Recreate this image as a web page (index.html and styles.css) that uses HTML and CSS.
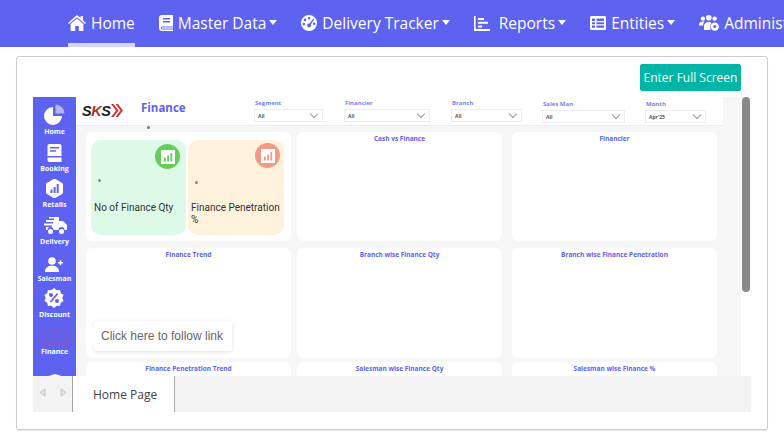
FILE: index.html
```html
<!DOCTYPE html>
<html lang="en">
<head>
  <meta charset="UTF-8" />
  <title>Finance</title>
  <link rel="stylesheet" href="styles.css">
</head>
<body>
  <nav class="topnav">
    <a class="navlink active">
      <svg class="navicon" width="18" height="16" viewBox="0 0 18 16"><path d="M9 0 L12.5 3 V1.2 H15 V5.2 L18 7.9 L17 9 L9 2.2 L1 9 L0 7.9 Z M9 3.6 L15.4 9 V16 H10.8 V11 H7.2 V16 H2.6 V9 Z"/></svg>
      <span>Home</span>
    </a>
    <a class="navlink">
      <svg class="navicon" width="14" height="16" viewBox="0 0 14 16"><path fill-rule="evenodd" d="M3 0 H14 V11.5 H3 A1.6 1.6 0 0 0 3 14.5 H14 V16 H3 A3 3 0 0 1 0 13 V3 A3 3 0 0 1 3 0 Z M4 3 V4.4 H11 V3 Z M4 6 V7.4 H11 V6 Z"/><path d="M3 12.4 H14 V13.6 H3 Z"/></svg>
      <span>Master Data</span><i class="caret"></i>
    </a>
    <a class="navlink">
      <svg class="navicon" width="16" height="16" viewBox="0 0 16 16"><path fill-rule="evenodd" d="M8 0 A8 8 0 1 1 8 16 A8 8 0 1 1 8 0 Z M8 2 A1.3 1.3 0 1 0 8 4.6 A1.3 1.3 0 1 0 8 2 Z M4 3.6 A1.3 1.3 0 1 0 4 6.2 A1.3 1.3 0 1 0 4 3.6 Z M12.2 3.8 L8.6 8.6 A1.9 1.9 0 1 0 9.8 9.6 L13.2 4.6 Z M2.8 7.8 A1.3 1.3 0 1 0 2.8 10.4 A1.3 1.3 0 1 0 2.8 7.8 Z M13.2 7.4 A1.3 1.3 0 1 0 13.2 10 A1.3 1.3 0 1 0 13.2 7.4 Z"/></svg>
      <span>Delivery Tracker</span><i class="caret"></i>
    </a>
    <a class="navlink">
      <svg class="navicon wide" width="16" height="16" viewBox="0 0 16 16"><path d="M0 1 H1.6 V14 H16 V16 H0 Z M4 3 H10 V5 H4 Z M4 6.8 H14 V8.8 H4 Z M4 10.6 H8 V12.6 H4 Z"/></svg>
      <span>Reports</span><i class="caret"></i>
    </a>
    <a class="navlink">
      <svg class="navicon" width="16" height="14" viewBox="0 0 16 14"><path fill-rule="evenodd" d="M1.5 0 H14.5 A1.5 1.5 0 0 1 16 1.5 V12.5 A1.5 1.5 0 0 1 14.5 14 H1.5 A1.5 1.5 0 0 1 0 12.5 V1.5 A1.5 1.5 0 0 1 1.5 0 Z M2 2.5 V5 H5 V2.5 Z M6.5 2.5 V5 H14 V2.5 Z M2 6.2 V8.2 H5 V6.2 Z M6.5 6.2 V8.2 H14 V6.2 Z M2 9.4 V11.8 H5 V9.4 Z M6.5 9.4 V11.8 H14 V9.4 Z"/></svg>
      <span>Entities</span><i class="caret"></i>
    </a>
    <a class="navlink">
      <svg class="navicon" width="20" height="16" viewBox="0 0 20 16"><circle cx="4" cy="3.6" r="2.2"/><circle cx="9.8" cy="2.8" r="2.8"/><circle cx="15.6" cy="3.6" r="2.2"/><path d="M0 10.5 C0 7.5 1.5 6.6 4 6.6 C5 6.6 5.4 7 5.4 7 C4.4 8 4.2 9 4.2 10.5 Z M5 15 V11.5 C5 8.6 7 7 9.8 7 C11 7 12 7.4 12.6 8 C11 9.5 10.8 12 11.6 15 Z"/><circle cx="15.8" cy="11.6" r="4.2"/><circle cx="15.8" cy="11.6" r="1.5" fill="#5d62f0"/></svg>
      <span>Administration</span>
    </a>
  </nav>

  <main class="card">
    <div class="card-actions">
      <button class="fs-btn">Enter Full Screen</button>
    </div>

    <div class="viewer">
      <div class="report">
        <aside class="side">
          <div class="side-item first">
            <svg width="21" height="21" viewBox="0 0 21 21"><path d="M9 3 V12 H18 A9 9 0 1 1 9 3 Z" fill="#fff"/><path d="M11.5 0.5 A9 9 0 0 1 20.5 9.5 H11.5 Z" fill="#b3b5f8"/></svg>
            <span>Home</span>
          </div>
          <div class="side-item">
            <svg width="15" height="18" viewBox="0 0 15 18"><path fill-rule="evenodd" d="M2.5 0 H12.5 A2 2 0 0 1 14.5 2 V12 H0.5 V2 A2 2 0 0 1 2.5 0 Z M3 3 V4.6 H12 V3 Z M3 6.2 V7.8 H9 V6.2 Z" fill="#fff"/><path d="M0.5 13.4 H14.5 V18 H2.5 A2 2 0 0 1 0.5 16 Z" fill="#fff"/></svg>
            <span>Booking</span>
          </div>
          <div class="side-item">
            <svg width="17" height="19" viewBox="0 0 17 19"><path d="M8.5 0 L16.5 4.7 V14.3 L8.5 19 L0.5 14.3 V4.7 Z" fill="#fff" stroke="#fff" stroke-linejoin="round"/><path d="M4.5 10.5 H6.5 V14 H4.5 Z M7.6 8 H9.6 V14 H7.6 Z M10.7 5 H12.7 V14 H10.7 Z" fill="#5d62f0"/></svg>
            <span>Retails</span>
          </div>
          <div class="side-item">
            <svg width="24" height="19" viewBox="0 0 24 19"><path d="M6 1 H16 V5 H20 L24 9 V14 H21.5 A3 3 0 0 0 15.5 14 H10.5 A3 3 0 0 0 4.5 14 H3 V11 H9 V9.5 H1 V7.5 H10 V6 H3 V4 H11 V2.5 H6 Z" fill="#fff"/><circle cx="7.5" cy="15.5" r="2.5" fill="#fff"/><circle cx="18.5" cy="15.5" r="2.5" fill="#fff"/></svg>
            <span>Delivery</span>
          </div>
          <div class="side-item">
            <svg width="18" height="15" viewBox="0 0 18 15"><circle cx="7" cy="4" r="3.8" fill="#fff"/><path d="M0 15 C0 10.5 3 8.8 7 8.8 C11 8.8 14 10.5 14 15 Z" fill="#fff"/><path d="M13 5 H18 V6.5 H13 Z M14.8 3.2 H16.2 V8.2 H14.8 Z" fill="#fff"/></svg>
            <span>Salesman</span>
          </div>
          <div class="side-item">
            <svg width="20" height="20" viewBox="0 0 20 20"><path fill-rule="evenodd" d="M10 0 L12.6 2.2 L16 1.9 L16.8 5.2 L19.6 7 L18.2 10 L19.6 13 L16.8 14.8 L16 18.1 L12.6 17.8 L10 20 L7.4 17.8 L4 18.1 L3.2 14.8 L0.4 13 L1.8 10 L0.4 7 L3.2 5.2 L4 1.9 L7.4 2.2 Z M7 5 A2 2 0 1 0 7 9 A2 2 0 1 0 7 5 Z M13 11 A2 2 0 1 0 13 15 A2 2 0 1 0 13 11 Z M13 5 L5.8 13.6 L7 14.8 L14.2 6.2 Z" fill="#fff"/></svg>
            <span>Discount</span>
          </div>
          <div class="side-item">
            <svg width="28" height="16" viewBox="0 0 28 16"><path fill-rule="evenodd" d="M0 0 H28 V16 H0 Z M4 3 L2.5 4.5 V11.5 L4 13 H24 L25.5 11.5 V4.5 L24 3 Z" fill="#7a5bd6"/><path fill-rule="evenodd" d="M14 3 A5 5 0 1 1 14 13 A5 5 0 1 1 14 3 Z M14 4.5 A3.5 3.5 0 1 0 14 11.5 A3.5 3.5 0 1 0 14 4.5 Z" fill="#7a5bd6"/></svg>
            <span>Finance</span>
          </div>
          <div class="side-item">
            <svg width="16" height="19" viewBox="0 0 16 19"><path fill-rule="evenodd" d="M8 0 L16 2.5 V9 C16 14 12.5 17.5 8 19 C3.5 17.5 0 14 0 9 V2.5 Z M5 5 L3.6 8.5 V13 H5.4 V12 H10.6 V13 H12.4 V8.5 L11 5 Z" fill="#fff"/></svg>
          </div>
        </aside>

        <div class="canvas">
          <header class="rep-head">
            <div class="logo">S<em>K</em>S<svg width="12" height="13" viewBox="0 0 12 13"><path d="M0 0 L5 6.5 L0 13 H2.5 L7.5 6.5 L2.5 0 Z M4.5 0 L9.5 6.5 L4.5 13 H7 L12 6.5 L7 0 Z" fill="#d6322f"/></svg></div>
            <div class="rep-title">Finance</div>
            <div class="slicer segment"><label>Segment</label><div class="sel"><span>All</span><i class="chev"></i></div></div>
            <div class="slicer financier"><label>Financier</label><div class="sel"><span>All</span><i class="chev"></i></div></div>
            <div class="slicer branch"><label>Branch</label><div class="sel"><span>All</span><i class="chev"></i></div></div>
            <div class="slicer salesman low"><label>Sales Man</label><div class="sel"><span>All</span><i class="chev"></i></div></div>
            <div class="slicer month low"><label>Month</label><div class="sel"><span>Apr'25</span><i class="chev"></i></div></div>
            <span class="title-dot"></span>
          </header>

          <div class="tiles">
            <section class="tile kpis">
              <div class="kpi green">
                <span class="badge"><svg width="14" height="14" viewBox="0 0 14 14"><path fill-rule="evenodd" d="M0 0 H14 V14 H0 Z M3 7.5 V11.5 H4.8 V7.5 Z M6.2 5.5 V11.5 H8 V5.5 Z M9.4 3 V11.5 H11.2 V3 Z" fill="#fff"/></svg></span>
                <span class="kpi-dot"></span>
                <p>No of Finance Qty</p>
              </div>
              <div class="kpi peach">
                <span class="badge"><svg width="14" height="14" viewBox="0 0 14 14"><path fill-rule="evenodd" d="M0 0 H14 V14 H0 Z M3 7.5 V11.5 H4.8 V7.5 Z M6.2 5.5 V11.5 H8 V5.5 Z M9.4 3 V11.5 H11.2 V3 Z" fill="#fff"/></svg></span>
                <span class="kpi-dot"></span>
                <p>Finance Penetration %</p>
              </div>
            </section>
            <section class="tile"><h3>Cash vs Finance</h3></section>
            <section class="tile last"><h3>Financier</h3></section>
            <section class="tile"><h3>Finance Trend</h3></section>
            <section class="tile"><h3>Branch wise Finance Qty</h3></section>
            <section class="tile last"><h3>Branch wise Finance Penetration</h3></section>
            <section class="tile"><h3>Finance Penetration Trend</h3></section>
            <section class="tile"><h3>Salesman wise Finance Qty</h3></section>
            <section class="tile last"><h3>Salesman wise Finance %</h3></section>
          </div>

          <div class="tooltip">Click here to follow link</div>
        </div>

        <div class="scroll"><div class="thumb"></div></div>
      </div>

      <footer class="tabbar">
        <div class="pager">
          <svg width="7" height="9" viewBox="0 0 7 9"><path d="M6 .8 V8.2 L1 4.5 Z" fill="#e3e3e3" stroke="#c4c4c4"/></svg>
          <svg width="7" height="9" viewBox="0 0 7 9"><path d="M1 .8 V8.2 L6 4.5 Z" fill="#e3e3e3" stroke="#c4c4c4"/></svg>
        </div>
        <div class="tab">Home Page</div>
      </footer>
    </div>
  </main>
</body>
</html>
```

FILE: styles.css
```css
* {
  box-sizing: border-box;
}
html, body {
  height: 445px;
  overflow: hidden;
}
body {
  margin: 0;
  background: #fff;
  font-family: "Open Sans", sans-serif;
}

/* top nav */
.topnav {
  display: flex;
  gap: 24px;
  height: 47px;
  padding-left: 68px;
  background: #5d62f0;
  overflow: hidden;
  white-space: nowrap;
}
.navlink {
  display: flex;
  align-items: center;
  height: 47px;
  color: #fff;
  font-size: 15.5px;
  border-bottom: 4px solid transparent;
  padding-top: 2px;
}
.navlink.active {
  border-bottom-color: #d5d6fb;
}
.navicon {
  fill: #fff;
  margin-right: 5px;
  flex: none;
}
.navicon.wide {
  margin-right: 9px;
}
.caret {
  width: 0;
  height: 0;
  margin-left: 3px;
  border-top: 5px solid #fff;
  border-left: 4px solid transparent;
  border-right: 4px solid transparent;
}

/* outer card */
.card {
  margin: 9px 0 0 16px;
  width: 752px;
  height: 374px;
  padding: 7px 16px 0;
  border: 1px solid #ccc;
  border-radius: 3px;
  box-shadow: 0 1px 1px #e4e4e4;
}
.card-actions {
  display: flex;
  justify-content: flex-end;
  padding-right: 10px;
  height: 33px;
}
.fs-btn {
  width: 101px;
  height: 27px;
  border: 1px solid #00b5a5;
  border-radius: 2px;
  background: #00b5a5;
  color: #fff;
  font-family: "Open Sans", sans-serif;
  font-size: 12px;
  padding: 0;
}

/* embedded report */
.viewer {
  width: 718px;
}
.report {
  display: flex;
  height: 279px;
  overflow: hidden;
  background: #f6f6f6;
  position: relative;
}
.side {
  flex: none;
  width: 43px;
  background: #5d62f0;
  display: flex;
  flex-direction: column;
  align-items: center;
  padding-top: 3px;
}
.side-item {
  height: 36.7px;
  flex: none;
  display: flex;
  flex-direction: column;
  align-items: center;
  justify-content: flex-end;
  gap: 2px;
  color: #fff;
  font: bold 7px "Open Sans", sans-serif;
  line-height: 9px;
}
.side-item.first {
  height: 36px;
}
.canvas {
  flex: none;
  width: 665px;
  position: relative;
}
.scroll {
  flex: none;
  width: 10px;
  background: #fff;
  padding-left: 1px;
}
.thumb {
  width: 8px;
  height: 195px;
  background: #8a8a8a;
  border-radius: 4px;
}

/* report header */
.rep-head {
  display: flex;
  width: 647px;
  height: 29px;
  background: #fff;
  border-bottom: 1px solid #ececec;
  position: relative;
}
.logo {
  width: 65px;
  padding: 6px 0 0 6px;
  color: #1b1b1b;
  font: italic bold 14.5px "Liberation Sans", sans-serif;
  letter-spacing: -0.5px;
  white-space: nowrap;
}
.logo em {
  color: #b1302e;
}
.logo svg {
  margin-left: 1px;
  vertical-align: -1px;
}
.rep-title {
  width: 113px;
  padding-top: 3px;
  color: #5d62f0;
  font: bold 11.5px "Open Sans", sans-serif;
}
.title-dot {
  position: absolute;
  left: 71px;
  top: 29px;
  width: 3px;
  height: 3px;
  border-radius: 50%;
  background: #777;
}
.slicer {
  padding-top: 1px;
}
.slicer.low {
  padding-top: 2px;
}
.slicer label {
  display: block;
  color: #7b7ff2;
  font: bold 6px/11px "Open Sans", sans-serif;
  padding-left: 1px;
}
.sel {
  display: flex;
  align-items: center;
  justify-content: space-between;
  height: 13px;
  padding: 0 3px;
  border: 1px solid #ececec;
  background: #fff;
  color: #555;
  font: bold 5px "Open Sans", sans-serif;
}
.chev {
  width: 6px;
  height: 6px;
  margin: -3px 2px 0 0;
  border-right: 1px solid #999;
  border-bottom: 1px solid #999;
  transform: rotate(45deg);
}
.segment { width: 69px; margin-right: 21px; }
.financier { width: 86px; margin-right: 21px; }
.branch { width: 71px; margin-right: 20px; }
.salesman { width: 83px; margin-right: 20px; }
.month { width: 61px; }

/* tiles */
.tiles {
  display: grid;
  grid-template-columns: 205px 205px 209px;
  grid-template-rows: 109px 111px 40px;
  column-gap: 6px;
  row-gap: 6px;
  padding: 6px 0 0 10px;
}
.tile {
  background: #fff;
  border-radius: 6px;
  padding-top: 2px;
}
.tile:nth-child(n+4) {
  margin-top: 1px;
}
.tile:nth-child(n+7) {
  margin-top: -2px;
}
.tile.last {
  margin-left: 4px;
}
.tile h3 {
  margin: 0;
  text-align: center;
  color: #5d62f0;
  font: bold 6.5px/10px "Open Sans", sans-serif;
}
.kpis {
  display: flex;
  gap: 2px;
  padding: 8px 0 0 5px;
}
.kpi {
  position: relative;
  width: 95px;
  height: 95px;
  border-radius: 10px;
  padding: 62px 3px 0;
}
.kpi.green { background: #ddfae8; }
.kpi.peach { background: #fef2dc; width: 96px; }
.kpi p {
  margin: 0;
  color: #333;
  font: 10px/12px "Roboto", sans-serif;
}
.badge {
  position: absolute;
  top: 4px;
  right: 6px;
  width: 25px;
  height: 25px;
  border-radius: 50%;
  display: flex;
  align-items: center;
  justify-content: center;
}
.green .badge { background: #66cc5c; }
.peach .badge { background: #f29a86; right: 4px; top: 3px; }
.kpi-dot {
  position: absolute;
  left: 7px;
  top: 39px;
  width: 3px;
  height: 3px;
  border-radius: 50%;
  background: #888;
}
.peach .kpi-dot { top: 41px; }

/* link tooltip */
.tooltip {
  position: absolute;
  left: 18px;
  top: 224px;
  width: 138px;
  height: 30px;
  padding-left: 7px;
  background: #fff;
  border-radius: 2px;
  box-shadow: 0 1px 4px rgba(0,0,0,.12);
  color: #666;
  font: 12px/30px "Liberation Sans", sans-serif;
  white-space: nowrap;
}
.tooltip::before {
  content: "";
  position: absolute;
  left: -10px;
  top: 5px;
  border-top: 10px solid transparent;
  border-bottom: 10px solid transparent;
  border-right: 10px solid #fff;
}

/* page tabs */
.tabbar {
  display: flex;
  height: 36px;
  background: #f3f3f3;
}
.pager {
  width: 39px;
  display: flex;
  align-items: center;
  justify-content: center;
  gap: 14px;
  padding-bottom: 3px;
}
.tab {
  width: 103px;
  border-left: 1px solid #aaa;
  border-right: 1px solid #aaa;
  background: #fff;
  color: #444;
  font-size: 12px;
  line-height: 37px;
  padding-left: 20px;
}
```
